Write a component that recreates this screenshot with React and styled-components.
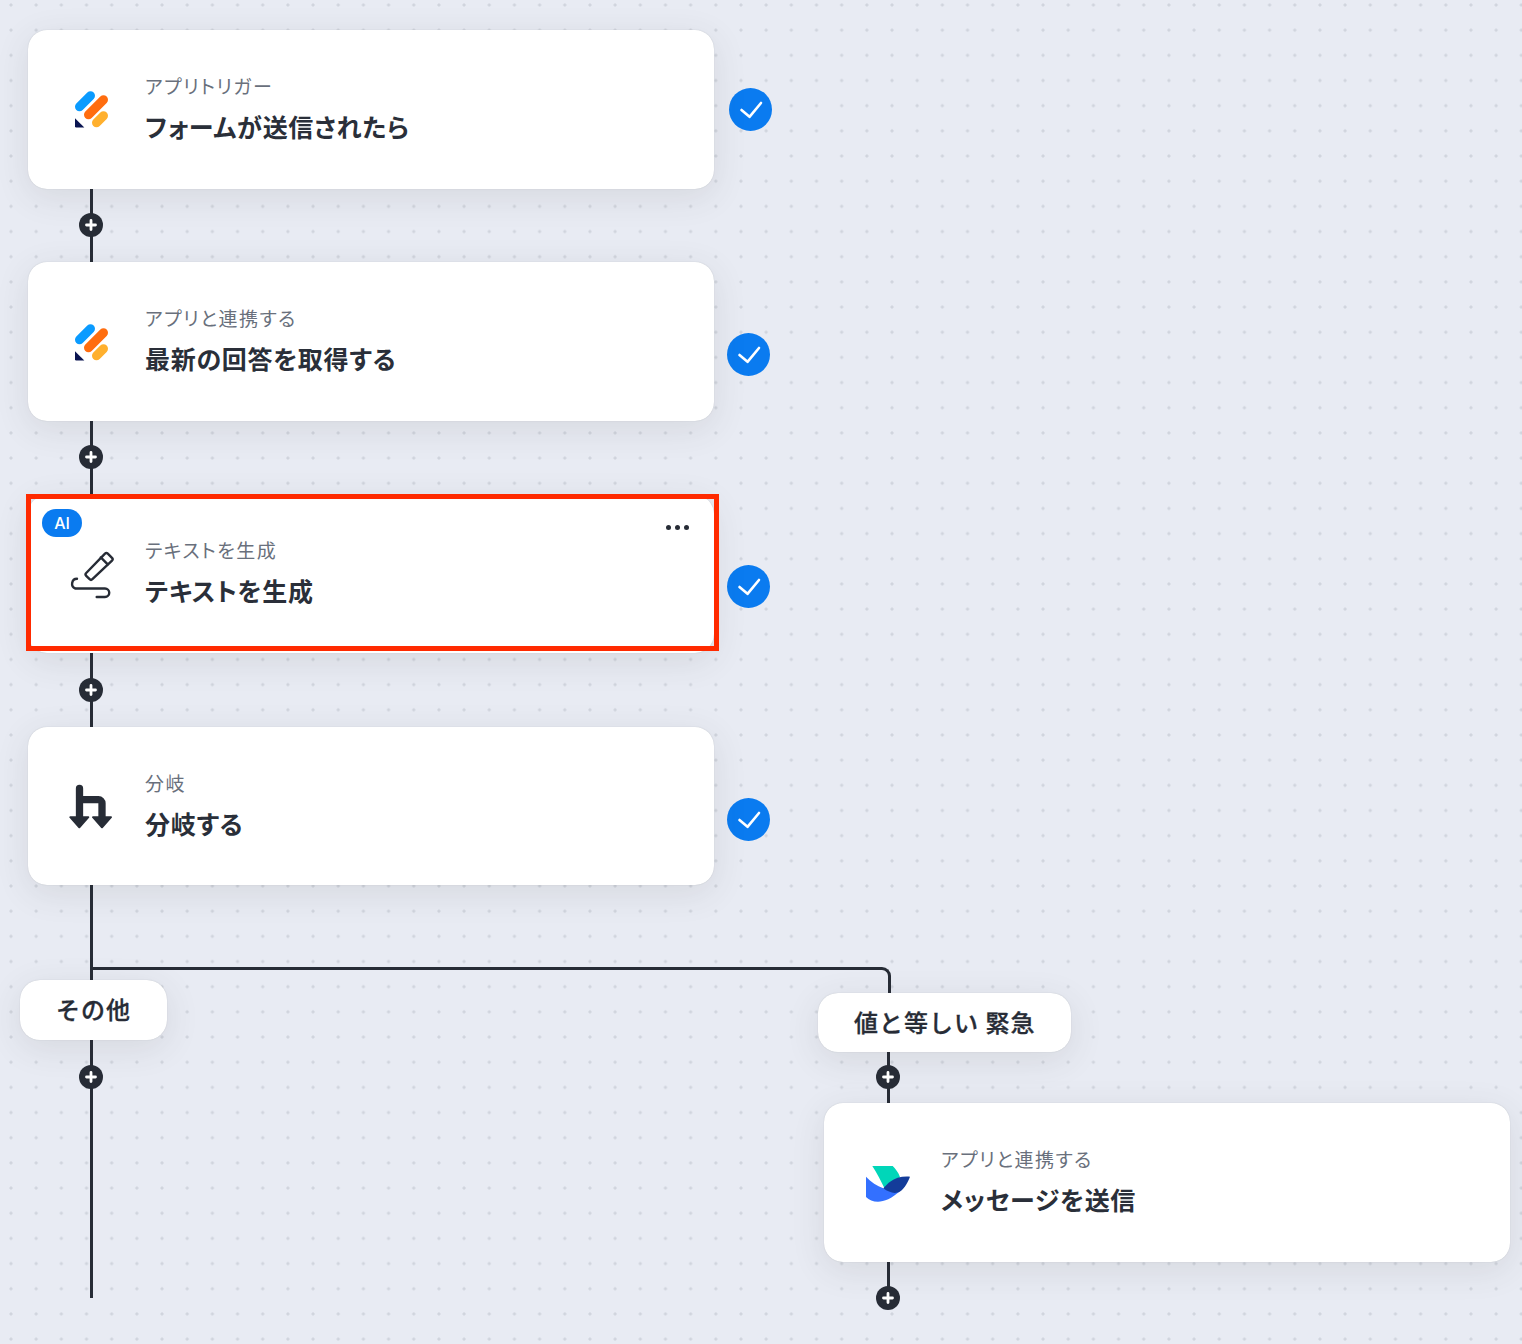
import React from "react";
import styled, { createGlobalStyle } from "styled-components";

const Global = createGlobalStyle`
  html, body { margin: 0; padding: 0; }
  body { font-family: "Noto Sans CJK JP", "Noto Sans", sans-serif; }
`;

const Canvas = styled.main`
  width: 1522px;
  height: 1344px;
  padding: 30px 0 0 28px;
  box-sizing: border-box;
  overflow: hidden;
  background-color: #e8ebf3;
  background-image: radial-gradient(circle, #d0d4dd 1.3px, transparent 1.8px);
  background-size: 25.18px 25.18px;
  background-position: -1.6px -7.6px;
`;

const Row = styled.div`
  display: flex;
  align-items: center;
  gap: ${(p) => (p.$first ? "15.5px" : "13.5px")};
`;

const Card = styled.section`
  position: relative;
  flex: none;
  width: 685.5px;
  height: 158.5px;
  box-sizing: border-box;
  padding-left: 40px;
  display: flex;
  align-items: center;
  gap: 31px;
  background: #fff;
  border-radius: 19px;
  box-shadow: 0 0 1px rgba(70, 80, 90, 0.3), 0 8px 34px rgba(60, 65, 60, 0.11);
  margin-left: ${(p) => p.$indent || 0}px;
`;

const IconBox = styled.svg`
  flex: none;
  width: 46px;
  height: 46px;
  overflow: visible;
`;

const Texts = styled.div`
  display: flex;
  flex-direction: column;
  gap: 9px;
  margin-top: -3px;
  font-feature-settings: "palt";
`;

const Sub = styled.div`
  font-size: 19px;
  line-height: 27px;
  letter-spacing: 1.5px;
  color: #69707c;
`;

const Title = styled.div`
  font-size: 25px;
  line-height: 36px;
  letter-spacing: 0.7px;
  font-weight: 700;
  color: #2a2f39;
`;

const Highlight = styled.div`
  position: absolute;
  top: -1px;
  left: -2.5px;
  right: -5px;
  bottom: 2px;
  border: 5px solid #ff2a00;
  pointer-events: none;
`;

const AiBadge = styled.span`
  position: absolute;
  top: 14px;
  left: 14px;
  width: 40px;
  height: 28px;
  border-radius: 14px;
  background: #0a7bf0;
  color: #fff;
  font: 500 16px/28px Inter, "Noto Sans", sans-serif;
  text-align: center;
`;

const Menu = styled.div`
  position: absolute;
  top: 30px;
  right: 24.5px;
  display: flex;
  gap: 4px;
`;

const MenuDot = styled.i`
  width: 5px;
  height: 5px;
  border-radius: 50%;
  background: #272c36;
`;

const Check = styled.svg`
  flex: none;
  width: 43px;
  height: 43px;
  margin-top: ${(p) => (p.$first ? "0" : "26px")};
`;

const Connector = styled.div`
  position: relative;
  width: 3px;
  height: ${(p) => p.$h}px;
  margin-left: ${(p) => p.$left}px;
  background: #272c36;
`;

const PlusBadge = styled.svg`
  position: absolute;
  left: 1px;
  top: ${(p) => p.$at}px;
  width: 24px;
  height: 24px;
  transform: translate(-50%, -50%);
  z-index: 1;
`;

const Branches = styled.div`
  position: relative;
  display: flex;
  margin-left: -8px;
`;

const Elbow = styled.div`
  position: absolute;
  top: 81.75px;
  left: 70px;
  width: 800.5px;
  height: 26px;
  box-sizing: border-box;
  border-top: 3px solid #272c36;
  border-right: 3px solid #272c36;
  border-top-right-radius: 9px;
`;

const LeftArm = styled.div`
  flex: none;
  width: 798px;
`;

const RightArm = styled.div`
  flex: none;
  padding-top: 107.75px;
`;

const Label = styled.div`
  position: relative;
  z-index: 1;
  width: fit-content;
  height: ${(p) => p.$h}px;
  box-sizing: border-box;
  padding: 0 36px 3px;
  display: flex;
  align-items: center;
  background: #fff;
  border-radius: 20px;
  box-shadow: 0 0 1px rgba(70, 80, 90, 0.3), 0 8px 34px rgba(60, 65, 60, 0.11);
  font-size: 24px;
  font-weight: 500;
  letter-spacing: 1px;
  -webkit-text-stroke: 0.3px #272c36;
  color: #272c36;
  white-space: pre;
`;

const Plus = ({ at = 36.5 }) => (
  <PlusBadge $at={at} viewBox="0 0 24 24">
    <circle cx="12" cy="12" r="12" fill="#272c36" />
    <path d="M12 7.5v9M7.5 12h9" stroke="#fff" strokeWidth="2.8" strokeLinecap="round" />
  </PlusBadge>
);

const Jotform = () => (
  <IconBox viewBox="0 0 46 46">
    <path d="M11.5 20.75L22.5 9.75" stroke="#0a9bff" strokeWidth="9" strokeLinecap="round" />
    <path d="M20.5 28.75L35.5 13.75" stroke="#ff6d0f" strokeWidth="9" strokeLinecap="round" />
    <path d="M28.5 36.75L35.5 29.75" stroke="#ffb02e" strokeWidth="9" strokeLinecap="round" />
    <path d="M7 32.3L16.3 41.4H8.2A1.2 1.2 0 0 1 7 40.2Z" fill="#0a1551" />
  </IconBox>
);

const PenIcon = () => (
  <IconBox viewBox="0 0 46 46" fill="none" stroke="#272c36" strokeWidth="2.4" strokeLinecap="round" strokeLinejoin="round">
    <path d="M37 2.6a2 2 0 0 1 2.8 0l4.2 4.2a2 2 0 0 1 0 2.8L24.4 28.2a2 2 0 0 1-2.8 0l-3.4-3.4a2 2 0 0 1 0-2.8Z" />
    <path d="M32.8 6.4l6.9 7" />
    <path d="M9 27.8a5 5 0 0 0-1.6 9.7H37a4.2 4.2 0 0 1 0 8.5h-8.3" />
  </IconBox>
);

const BranchIcon = () => (
  <IconBox viewBox="0 0 46 46">
    <path d="M11.5 5.5V36M11.5 16.7H30.5A3.5 3.5 0 0 1 34 20.2V36" fill="none" stroke="#272c36" strokeWidth="7.3" strokeLinecap="round" />
    <path d="M2.3 34.2H20.3L11.3 44.3ZM25 34.2H43L34 44.3Z" fill="#272c36" stroke="#272c36" strokeWidth="2" strokeLinejoin="round" />
  </IconBox>
);

const Lark = () => (
  <IconBox viewBox="0 0 46 46">
    <path d="M8.3 7H28.7C31.5 10 34.5 13.5 36 18L30 28L21 30.3C17 22 13 14 8.3 7Z" fill="#00d6b9" />
    <path d="M2 17.7C7 23 13 27 19.3 29.3L36 32C28 39.5 20 42.7 14 42.7C9 42.7 5 41 2 38Z" fill="#3370ff" />
    <path d="M19.3 29.3C22 26.5 24 24 26.5 22.5C31 19 38 17 46 17.7C44 23 41 29 36 32.5C31 35.5 25 33.5 19.3 29.3Z" fill="#133c9a" />
  </IconBox>
);

const CheckMark = ({ first }) => (
  <Check $first={first} viewBox="0 0 43 43">
    <circle cx="21.5" cy="21.5" r="21.5" fill="#0a7bf0" />
    <path d="M12.5 22l8 6.8L32 15" fill="none" stroke="#fff" strokeWidth="2.6" strokeLinecap="round" strokeLinejoin="round" />
  </Check>
);

const Node = ({ icon, sub, title, indent, children }) => (
  <Card $indent={indent}>
    {icon}
    <Texts>
      <Sub>{sub}</Sub>
      <Title>{title}</Title>
    </Texts>
    {children}
  </Card>
);

export default function App() {
  return (
    <Canvas>
      <Global />
      <Row $first>
        <Node icon={<Jotform />} sub="アプリトリガー" title="フォームが送信されたら" />
        <CheckMark first />
      </Row>
      <Connector $h={73.75} $left={62}><Plus /></Connector>
      <Row>
        <Node icon={<Jotform />} sub="アプリと連携する" title="最新の回答を取得する" />
        <CheckMark />
      </Row>
      <Connector $h={73.75} $left={62}><Plus /></Connector>
      <Row>
        <Node icon={<PenIcon />} sub="テキストを生成" title="テキストを生成">
          <AiBadge>AI</AiBadge>
          <Menu>
            <MenuDot />
            <MenuDot />
            <MenuDot />
          </Menu>
          <Highlight />
        </Node>
        <CheckMark />
      </Row>
      <Connector $h={73.75} $left={62}><Plus /></Connector>
      <Row>
        <Node icon={<BranchIcon />} sub="分岐" title="分岐する" />
        <CheckMark />
      </Row>
      <Branches>
        <Elbow />
        <LeftArm>
          <Connector $h={95} $left={70} />
          <Label $h={60}>その他</Label>
          <Connector $h={258} $left={70}><Plus at={36.5} /></Connector>
        </LeftArm>
        <RightArm>
          <Label $h={59}>値と等しい 緊急</Label>
          <Connector $h={51} $left={68.5}><Plus at={24.5} /></Connector>
          <Node icon={<Lark />} indent={6} sub="アプリと連携する" title="メッセージを送信" />
          <Connector $h={37} $left={68.5}><Plus at={36.5} /></Connector>
        </RightArm>
      </Branches>
    </Canvas>
  );
}
